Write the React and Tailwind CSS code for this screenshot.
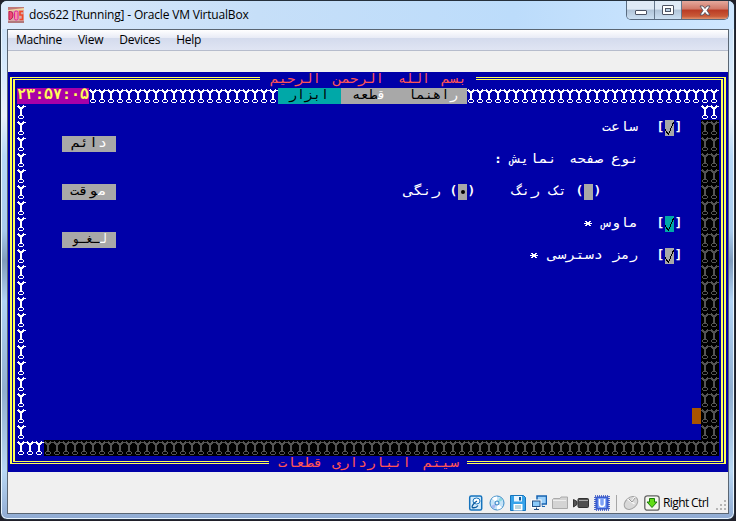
import React from "react";

const GLYPH = [
  ".........",
  ".X....X..",
  "XXX..XXXX",
  ".XXXXXX..",
  "..XXXX...",
  "...XX....",
  "...XX....",
  "...XX....",
  "...XX....",
  "...XX....",
  "...XX....",
  "..XXXX...",
  ".X....X..",
  ".X....X..",
  "..XXXX...",
  ".........",
];

const glyphPath = GLYPH.map((row, y) =>
  [...row].map((c, x) => (c === "X" ? `M${x} ${y}h1v1h-1z` : "")).join("")
).join("");

const at = (col, row, cols = 1, rows = 1) => ({
  gridColumn: `${col + 1} / span ${cols}`,
  gridRow: `${row + 1} / span ${rows}`,
});

function Pattern({ col, row, cols, rows = 1, className = "text-white" }) {
  const cells = [];
  for (let y = 0; y < rows; y++) for (let x = 0; x < cols; x++) cells.push([x, y]);
  return (
    <svg className={className} style={at(col, row, cols, rows)} width={cols * 9} height={rows * 16} shapeRendering="crispEdges" fill="currentColor">
      {cells.map(([x, y]) => (
        <path key={`${x}-${y}`} d={glyphPath} transform={`translate(${x * 9} ${y * 16})`} />
      ))}
    </svg>
  );
}

const ADVANCE = 7.83;

// A word fitted to the columns of the text screen; `hot` letters are its accelerator.
function Word({ hot = "", children, x, w, row }) {
  const n = (hot + children).length;
  const col = Math.floor(x / 9);
  return (
    <span
      dir="rtl"
      className="block h-4 w-max origin-left whitespace-nowrap font-['DejaVu_Sans_Mono',monospace] text-[13px] leading-[14px]"
      style={{ ...at(col, row), marginLeft: x - col * 9, transform: `scaleX(${w / (n * ADVANCE)})` }}
    >
      {hot && <span className="text-white">{hot}</span>}
      {children}
    </span>
  );
}

function Fill({ col, row, cols = 1, className }) {
  return <span className={className} style={at(col, row, cols)} />;
}

function Mark({ col, row, open, close, className = "bg-[#a8a8a8]", children }) {
  return (
    <span
      className="grid h-4 grid-cols-[9px_9px_9px] text-center font-['DejaVu_Sans_Mono',monospace] text-[13px] font-bold leading-[14px] text-white"
      style={at(col, row, 3)}
    >
      <span>{open}</span>
      <span className={`flex h-4 justify-center overflow-hidden font-normal text-black ${className}`}>{children}</span>
      <span>{close}</span>
    </span>
  );
}

const Check = () => (
  <svg width="9" height="16" fill="none" stroke="currentColor" shapeRendering="crispEdges">
    <path d="M.5 9v2M1.5 11v2M2.5 12v2M3.5 13v2M4.5 11v2M5.5 8v3M6.5 6v2M7.5 3v3M8.5 2v2" />
  </svg>
);

const Star = ({ col, row }) => (
  <svg width="9" height="16" className="text-white" style={at(col, row)} shapeRendering="crispEdges">
    <path d="M1 5h2v1H1zM5 5h2v1H5zM2 6h4v1H2zM0 7h8v1H0zM2 8h4v1H2zM1 9h2v1H1zM5 9h2v1H5z" fill="currentColor" />
  </svg>
);

const words = [
  ["بسم", 433, 26, 0, "text-[#ff5555]"],
  ["الله", 390, 32, 0, "text-[#ff5555]"],
  ["الرحمن", 325, 51, 0, "text-[#ff5555]"],
  ["الرحیم", 262, 51, 0, "text-[#ff5555]"],
  ["ساعت", 594, 36, 3, "text-white"],
  ["نوع", 603, 28, 5, "text-white"],
  ["صفحه", 561, 34, 5, "text-white"],
  ["نمایش", 503, 46, 5, "text-white"],
  [":", 486, 8, 5, "text-white font-bold"],
  ["تک", 541, 18, 7, "text-white"],
  ["رنگ", 504, 28, 7, "text-white"],
  ["رنگی", 396, 37, 7, "text-white"],
  ["ماوس", 594, 36, 9, "text-white"],
  ["رمز", 605, 25, 11, "text-white"],
  ["دسترسی", 540, 55, 11, "text-white"],
  ["سیتم", 415, 36, 24, "text-[#ff5555]"],
  ["انبارداری", 324, 79, 24, "text-[#ff5555]"],
  ["قطعات", 270, 45, 24, "text-[#ff5555]"],
];

function DosScreen() {
  return (
    <div dir="ltr" className="grid h-[400px] w-[720px] shrink-0 grid-cols-[repeat(80,9px)] grid-rows-[repeat(25,16px)] overflow-hidden bg-[#0000a8]">
      <div className="mb-2 ml-0.5 mr-0.5 mt-[5px] border-x-2 border-y border-[#ffff55] px-px py-px" style={at(0, 0, 80, 25)}>
        <div className="h-full border-x-2 border-y border-[#ffff55]" />
      </div>
      <Fill col={28} row={0} cols={24} className="bg-[#0000a8]" />
      <Fill col={29} row={24} cols={22} className="bg-[#0000a8]" />

      <Fill col={1} row={1} cols={8} className="bg-[#a800a8]" />
      <span className="h-4 whitespace-nowrap text-center font-['DejaVu_Sans_Mono',monospace] text-[14.95px] font-bold leading-[13px] text-[#ffff55]" style={at(1, 1, 8)}>
        <bdo dir="ltr">۲۳:۵۷:۰۵</bdo>
      </span>
      <Pattern col={9} row={1} cols={21} />
      <Pattern col={51} row={1} cols={28} />
      <Pattern col={1} row={2} cols={1} rows={21} />
      <Pattern col={77} row={2} cols={2} />
      <Pattern col={77} row={3} cols={2} rows={20} className="bg-black text-[#545454]" />
      <Pattern col={1} row={23} cols={3} />
      <Pattern col={4} row={23} cols={75} className="bg-black text-[#545454]" />

      <Fill col={30} row={1} cols={7} className="bg-[#00a8a8]" />
      <Fill col={37} row={1} cols={14} className="bg-[#a8a8a8]" />
      <Word x={281} w={40} row={1}>ابزار</Word>
      <Word x={344} w={34} row={1} hot="ق">طعه</Word>
      <Word x={400} w={50} row={1} hot="ر">اهنما</Word>

      <Fill col={6} row={4} cols={6} className="bg-[#a8a8a8]" />
      <Fill col={6} row={7} cols={6} className="bg-[#a8a8a8]" />
      <Fill col={6} row={10} cols={6} className="bg-[#a8a8a8]" />
      <Word x={63} w={36} row={4} hot="د">ائم</Word>
      <Word x={62} w={37} row={7} hot="م">وقت</Word>
      <Word x={64} w={35} row={10} hot="ل">ـغـو</Word>

      {words.map(([text, x, w, row, color]) => (
        <div key={text} className={`contents ${color}`}>
          <Word x={x} w={w} row={row}>{text}</Word>
        </div>
      ))}

      <Mark col={72} row={3} open="[" close="]"><Check /></Mark>
      <Mark col={63} row={7} open="(" close=")" />
      <Mark col={49} row={7} open="(" close=")"><span className="mt-1.5 size-1 rounded-full bg-black" /></Mark>
      <Mark col={72} row={9} open="[" close="]" className="bg-[#00a8a8]"><Check /></Mark>
      <Mark col={72} row={11} open="[" close="]"><Check /></Mark>
      <Star col={64} row={9} />
      <Star col={58} row={11} />
      <Fill col={76} row={21} className="bg-[#a85400]" />
    </div>
  );
}

function AppIcon() {
  return (
    <svg width="16" height="16" viewBox="0 0 16 16">
      <rect width="16" height="16" fill="#d8a8a8" />
      <path d="M0 0h16v3H0z" fill="#c07878" />
      <path d="M0 3l16-2v2L0 4z" fill="#f0d8a0" />
      <path d="M1 4.500h1.500q2.500 0 2.500 3.500t-2.500 4.500H1z" fill="#f04878" stroke="#b82050" />
      <rect x="6.500" y="4" width="3.500" height="9" rx="1.500" fill="#f890a0" stroke="#e020a0" />
      <path d="M15 4.500h-3v3.500h2.500v4.500H11.500" fill="none" stroke="#f04828" strokeWidth="1.600" />
      <path d="M0 15h16" stroke="#8a4a50" />
    </svg>
  );
}

function StatusIcons() {
  return (
    <div className="flex items-center gap-[5px]">
      <svg width="16" height="16" viewBox="0 0 16 16">
        <rect x="1.700" y="1" width="12" height="14" rx="1.500" fill="#d5ecfb" stroke="#1673bd" strokeWidth="1.500" />
        <ellipse cx="8.500" cy="6" rx="3.500" ry="3" fill="#fff" stroke="#1673bd" />
        <path d="M4 12.500q0-3 5-6.500M4 12.500q4 1 6-2" fill="none" stroke="#0c5a9e" strokeWidth="1.300" />
      </svg>
      <svg width="16" height="16" viewBox="0 0 16 16">
        <circle cx="8" cy="8" r="7" fill="#c7e4f8" stroke="#3a8bc8" />
        <path d="M8 8L3 3.500A7 7 0 0 1 8 1.500zM8 8l5 4.500A7 7 0 0 1 8 14.500z" fill="#fff" />
        <path d="M8 8L11 2.500 14 5z" fill="#8cd8e0" />
        <path d="M8 8L2 11l3 3z" fill="#a9b9ef" />
        <circle cx="8" cy="8" r="2" fill="#eef6fc" stroke="#2a7cc0" />
      </svg>
      <svg width="16" height="16" viewBox="0 0 16 16">
        <path d="M.5 .5h13l2 2v13H.5z" fill="#36a3ea" stroke="#1675bd" />
        <path d="M4 1h8v5.500H4z" fill="#e8f5ff" />
        <path d="M9 2h2v3.500H9z" fill="#155d9a" />
        <path d="M3.500 9h9v6.500h-9z" fill="#fff" />
        <path d="M5 11h6M5 13h6" stroke="#7ab" />
      </svg>
      <svg width="16" height="16" viewBox="0 0 16 16">
        <rect x="6" y="1" width="9.500" height="8" fill="#9bd0fa" stroke="#1763b0" strokeWidth="1.500" />
        <path d="M11 9v2.500h3" fill="none" stroke="#1763b0" />
        <rect x=".5" y="5" width="9.500" height="7.500" fill="#244f84" stroke="#fff" />
        <rect x="2" y="6.500" width="6.500" height="4.500" fill="#8ccbfa" />
        <path d="M5.500 12.500v2M3 14.500h5" stroke="#244f84" />
      </svg>
      <svg width="16" height="16" viewBox="0 0 16 16">
        <path d="M.5 13.500V4.500l1-1H8l1-1.500h6.500v11.500z" fill="#d4d4d4" stroke="#aaa" />
        <path d="M1 5.500h13" stroke="#eee" />
      </svg>
      <svg width="16" height="16" viewBox="0 0 16 16">
        <rect x="5" y="3.500" width="10.500" height="9" rx="1" fill="#505050" stroke="#333" />
        <path d="M.5 4.500L4 6.500v3L.5 12z" fill="#555" stroke="#333" />
        <path d="M6 5.500h9" stroke="#aaa" />
      </svg>
      <svg width="16" height="16" viewBox="0 0 16 16">
        <rect x="1" y="1" width="14" height="14" fill="none" stroke="#2849c0" strokeWidth="1.600" strokeDasharray="1 1" />
        <rect x="2" y="2" width="12" height="12" rx="1" fill="#4c74e4" stroke="#2849c0" />
        <rect x="4" y="3" width="8" height="10" fill="#7da0f4" />
        <path d="M5.500 4v5q0 2.500 2.500 2.500T10.500 9V4" fill="none" stroke="#fff" strokeWidth="1.500" />
      </svg>
    </div>
  );
}

export default function App() {
  return (
    <div className="h-[521px] w-[736px] overflow-hidden bg-[#20202a] font-['Open_Sans','Noto_Sans',sans-serif] text-[12px] text-black">
      <div className="flex h-[520px] w-[735px] flex-col overflow-hidden rounded-[7px] border border-[#25303c] bg-[linear-gradient(180deg,#c5dcf4_0px,#d5e9fc_60px,#e8f1fa_115px,#b8d9f8_155px,#a9cbed_230px,#7f9bbc_260px,#b2d4f6_300px,#90aed0_390px,#b9d8f4_470px,#8ea9d1_520px)] shadow-[inset_0_0_0_1px_#e9f5ff]">
        <header className="flex h-7 shrink-0 items-start bg-[linear-gradient(90deg,#dceafb,#c6dff8_35%,#bcdcfb_70%,#cfe7ff)] pl-[7px]">
          <div className="flex h-7 items-center gap-[5px]">
            <AppIcon />
            <h1 className="whitespace-nowrap text-[12px] leading-4 tracking-[-0.18px]">dos622 [Running] - Oracle VM VirtualBox</h1>
          </div>
          <div className="ml-auto mr-[5px] flex h-[19px] w-[103px] overflow-hidden rounded-b-[5px] border border-t-0 border-[#596b80]">
            <div className="flex w-7 items-center justify-center border-r border-[#66788c] bg-[linear-gradient(180deg,#dfeaf6_45%,#b1c4d8_50%,#cbdff2)]">
              <span className="mt-1 h-[5px] w-3 rounded-[1px] border border-[#4d5363] bg-white" />
            </div>
            <div className="flex w-[27px] items-center justify-center border-r border-[#66788c] bg-[linear-gradient(180deg,#dfeaf6_45%,#b1c4d8_50%,#cbdff2)]">
              <span className="flex h-2.5 w-3 items-center justify-center rounded-[1px] border border-[#4d5363] bg-white"><span className="h-1 w-1.5 border border-[#4d5363] bg-[#b9cfe2]" /></span>
            </div>
            <div className="flex flex-1 items-center justify-center bg-[linear-gradient(180deg,#e4a99d_0%,#d07766_45%,#b93b24_50%,#c95a38_85%,#e09470)]">
              <svg width="12" height="11" viewBox="0 0 12 11"><path d="M1 1h3l2 2.500L8 1h3L8 5.500 11 10H8L6 7.500 4 10H1l3-4.500z" fill="#fff" stroke="#53505c" strokeWidth=".9" /></svg>
            </div>
          </div>
        </header>

        <main className="ml-1.5 flex h-[485px] w-[722px] shrink-0 flex-col border border-[#5a6673] bg-[#f0f0f0]">
          <nav className="flex h-[21px] shrink-0 items-center gap-4 border-b border-[#b6bccc] bg-[linear-gradient(180deg,#fff_0%,#e9ecf6_38%,#d4dbed_42%,#e0e5f3_100%)] pl-2 text-[12px] leading-4 tracking-[-0.25px]">
            <span>Machine</span>
            <span>View</span>
            <span>Devices</span>
            <span>Help</span>
          </nav>
          <div className="h-[21px] shrink-0" />
          <DosScreen />
          <footer className="flex flex-1 items-end justify-end pb-px">
            <div className="flex h-[18px] items-center">
              <StatusIcons />
              <span className="ml-[6px] h-4 w-px bg-[#a6a6a6]" />
              <svg className="ml-1.5" width="16" height="16" viewBox="0 0 16 16">
                <ellipse cx="8" cy="8" rx="7.500" ry="5.500" transform="rotate(-40 8 8)" fill="#d8d8d8" stroke="#a3a3a3" />
                <path d="M4.500 4l7 5M8.500 7l3.500-5" stroke="#f8f8f8" strokeWidth="1.500" />
                <path d="M6 4l3 3 3-4" fill="none" stroke="#999" />
              </svg>
              <svg className="ml-[5px]" width="16" height="16" viewBox="0 0 16 16">
                <rect x=".8" y=".8" width="14.400" height="14.400" rx="2.500" fill="#f5f5ee" stroke="#626262" strokeWidth="1.300" />
                <path d="M5.500 3.500h5V7h2.500L8 12.500 3 7h2.500z" fill="#62dc16" stroke="#197b0b" />
              </svg>
              <span className="ml-[3px] w-[48px] whitespace-nowrap text-[12px] leading-4 tracking-[-0.6px]">Right Ctrl</span>
              <svg className="ml-[5px] self-end" width="12" height="12" fill="#b5b5b5">
                <path d="M8 0h2v2H8zM4 4h2v2H4zM8 4h2v2H8zM0 8h2v2H0zM4 8h2v2H4zM8 8h2v2H8z" />
              </svg>
            </div>
          </footer>
        </main>
      </div>
    </div>
  );
}
